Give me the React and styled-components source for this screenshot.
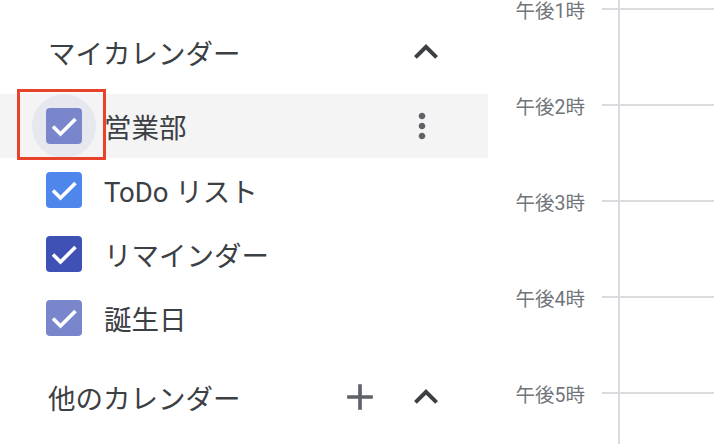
import React from 'react';
import styled, {createGlobalStyle} from 'styled-components';

const GlobalStyle = createGlobalStyle`
  html, body {
    margin: 0;
    padding: 0;
    background: #ffffff;
  }
  body {
    font-family: Roboto, "Noto Sans CJK JP", sans-serif;
    overflow: hidden;
  }
`;

const Page = styled.div`
  width: 714px;
  height: 444px;
  display: flex;
  flex-direction: row;
  overflow: hidden;
  background: #fff;
`;

const Sidebar = styled.div`
  width: 488px;
  flex-shrink: 0;
  padding-top: 20px;
  box-sizing: border-box;
`;

const SectionHeader = styled.div`
  height: 64px;
  display: flex;
  align-items: center;
  padding-left: 48px;
  padding-right: 30px;
  margin-top: ${p => p.$gap || 0}px;
  color: #3c4043;
  font-size: 27.5px;
`;

const HeaderTitle = styled.div`
  flex: 1;
`;

const IconButton = styled.div`
  width: ${p => p.$size || 64}px;
  height: 64px;
  display: flex;
  align-items: center;
  justify-content: center;
  color: ${p => p.$color || '#3c4043'};
  cursor: pointer;
  & + & {
    margin-left: 2px;
  }
`;

const CalendarList = styled.ul`
  list-style-type: none;
  margin: 10px 0 0 0;
  padding: 0;
`;

const Row = styled.li`
  position: relative;
  height: 64px;
  display: flex;
  align-items: center;
  padding-left: 32px;
  padding-right: 42px;
  background: ${p => p.$hover ? '#f4f4f5' : 'transparent'};
`;

const CheckWrap = styled.div`
  width: 64px;
  height: 64px;
  border-radius: 50%;
  display: flex;
  align-items: center;
  justify-content: center;
  background: ${p => p.$hover ? '#e6e7ef' : 'transparent'};
`;

const Label = styled.div`
  flex: 1;
  margin-left: 8px;
  font-size: 27.5px;
  color: #3c4043;
  white-space: nowrap;
`;

const Highlight = styled.div`
  position: absolute;
  left: 17px;
  top: -5px;
  width: 89px;
  height: 71px;
  border: 3px solid #e8432a;
  box-sizing: border-box;
  pointer-events: none;
`;

const TimeGrid = styled.div`
  flex: 1;
  display: flex;
  flex-direction: row;
`;

const Gutter = styled.div`
  width: 130px;
  flex-shrink: 0;
  padding-top: 8px;
`;

const HourRow = styled.div`
  height: 96px;
  display: flex;
  align-items: flex-start;
`;

const HourLabel = styled.div`
  width: 97px;
  margin-top: -8px;
  line-height: 24px;
  text-align: right;
  padding-right: 17px;
  font-size: 19.5px;
  color: #70757a;
  white-space: nowrap;
`;

const Tick = styled.div`
  flex: 1;
  border-top: 2px solid #dadce0;
`;

const DayColumn = styled.div`
  flex: 1;
  border-left: 2px solid #dadce0;
  padding-top: 8px;
`;

const Slot = styled.div`
  height: 96px;
  box-sizing: border-box;
  border-top: 2px solid #dadce0;
`;

const CheckBox = ({color}) => (
  <svg width="36" height="36" viewBox="0 0 36 36">
    <rect x="0" y="0" width="36" height="36" rx="4" fill={color}/>
    <polyline points="7,18.5 14.5,26 29.5,11" fill="none" stroke="#fff" strokeWidth="3.6"/>
  </svg>
);

const ChevronUp = () => (
  <svg width="48" height="48" viewBox="0 0 24 24" fill="currentColor">
    <path d="M12 8l-6 6 1.41 1.41L12 10.83l4.59 4.58L18 14z"/>
  </svg>
);

const Plus = () => (
  <svg width="44" height="44" viewBox="0 0 24 24" fill="currentColor">
    <path d="M19 13h-6v6h-2v-6H5v-2h6V5h2v6h6v2z"/>
  </svg>
);

const MoreVert = () => (
  <svg width="40" height="40" viewBox="0 0 24 24" fill="currentColor">
    <path d="M12 8c1.1 0 2-.9 2-2s-.9-2-2-2-2 .9-2 2 .9 2 2 2zm0 2c-1.1 0-2 .9-2 2s.9 2 2 2 2-.9 2-2-.9-2-2-2zm0 6c-1.1 0-2 .9-2 2s.9 2 2 2 2-.9 2-2-.9-2-2-2z"/>
  </svg>
);

const calendars = [
  {title: '営業部', color: '#7986cb', hover: true},
  {title: 'ToDo リスト', color: '#4f86ec'},
  {title: 'リマインダー', color: '#3f51b5'},
  {title: '誕生日', color: '#7986cb'},
];

const hours = ['午後1時', '午後2時', '午後3時', '午後4時', '午後5時'];

export default function App() {
  return (
    <Page>
      <GlobalStyle/>
      <Sidebar>
        <SectionHeader>
          <HeaderTitle>マイカレンダー</HeaderTitle>
          <IconButton><ChevronUp/></IconButton>
        </SectionHeader>
        <CalendarList>
          {calendars.map(cal => (
            <Row key={cal.title} $hover={cal.hover}>
              <CheckWrap $hover={cal.hover}>
                <CheckBox color={cal.color}/>
              </CheckWrap>
              <Label>{cal.title}</Label>
              {cal.hover && <IconButton $size={48} $color="#5f6368"><MoreVert/></IconButton>}
              {cal.hover && <Highlight/>}
            </Row>
          ))}
        </CalendarList>
        <SectionHeader $gap={15}>
          <HeaderTitle>他のカレンダー</HeaderTitle>
          <IconButton $color="#5f6368"><Plus/></IconButton>
          <IconButton><ChevronUp/></IconButton>
        </SectionHeader>
      </Sidebar>
      <TimeGrid>
        <Gutter>
          {hours.map(h => (
            <HourRow key={h}>
              <HourLabel>{h}</HourLabel>
              <Tick/>
            </HourRow>
          ))}
        </Gutter>
        <DayColumn>
          {hours.map(h => <Slot key={h}/>)}
        </DayColumn>
      </TimeGrid>
    </Page>
  );
}
